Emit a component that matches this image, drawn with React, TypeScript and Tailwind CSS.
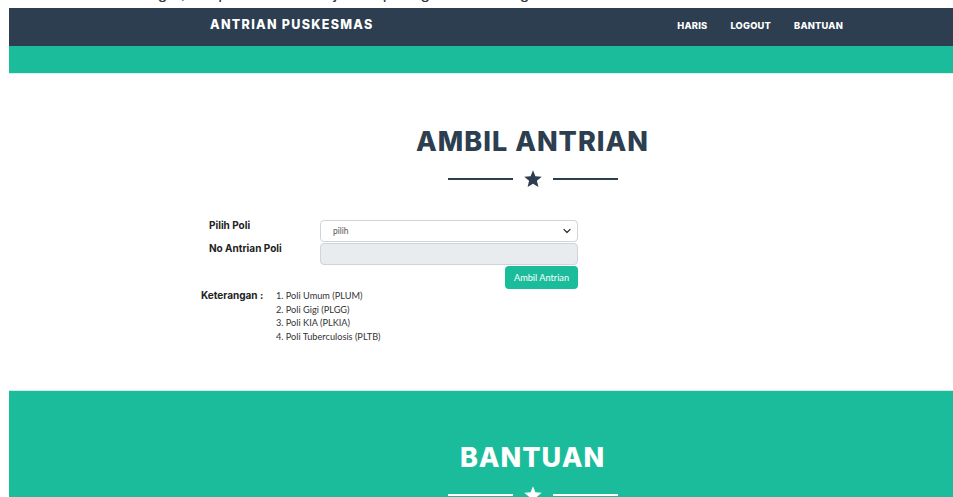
import React from "react";

const Star = ({ className }: { className: string }) => (
  <svg viewBox="0 0 24 24" className={className} fill="currentColor">
    <polygon points="12,1.5 14.9,8.6 22.5,9.2 16.7,14.2 18.5,21.7 12,17.7 5.5,21.7 7.3,14.2 1.5,9.2 9.1,8.6" />
  </svg>
);

const Divider = ({ light }: { light?: boolean }) => (
  <div className={`flex items-center justify-center gap-[10px] ${light ? "text-white" : "text-[#2c3e50]"}`}>
    <div className={`h-[2.5px] w-[65px] ${light ? "bg-white" : "bg-[#2c3e50]"}`} />
    <Star className="w-[20px] h-[20px]" />
    <div className={`h-[2.5px] w-[65px] ${light ? "bg-white" : "bg-[#2c3e50]"}`} />
  </div>
);

const heading = "font-['Inter',sans-serif] font-extrabold text-[27px] leading-[27px] tracking-[1px] text-center";
const labelCls = "font-['Inter',sans-serif] font-bold text-[10px] text-[#222]";

export default function App() {
  const poli = [
    "1. Poli Umum (PLUM)",
    "2. Poli Gigi (PLGG)",
    "3. Poli KIA (PLKIA)",
    "4. Poli Tuberculosis (PLTB)",
  ];

  return (
    <div className="w-[953px] h-[497px] overflow-hidden bg-white">
      {/* caption line above the page frame */}
      <div className="h-[8px] overflow-hidden">
        <p className="mt-[-16px] ml-[-2px] whitespace-nowrap font-['Liberation_Sans',Arial,sans-serif] text-[17px] leading-[20px] text-[#333]">
          Kemudian setelah Login, tampilan akan menjadi seperti gambar sebagai berikut
        </p>
      </div>

      <div className="ml-[9px]">
        {/* navbar */}
        <nav className="h-[38px] bg-[#2c3e50]">
          <div className="ml-[186px] w-[675px] h-full px-[15px] flex items-center justify-between pb-[3px]">
            <span className="font-['Inter',sans-serif] font-extrabold text-[12.5px] tracking-[1.3px] text-white">
              ANTRIAN PUSKESMAS
            </span>
            <div className="flex gap-[23px] pr-[12px] font-['Inter',sans-serif] font-extrabold text-[9.3px] text-white tracking-[0.2px]">
              <span>HARIS</span>
              <span>LOGOUT</span>
              <span>BANTUAN</span>
            </div>
          </div>
        </nav>
        <div className="h-[28px] bg-[#1abc9c] border-b border-[#d3f2ea]" />

        {/* ambil antrian */}
        <section className="h-[316px] pt-[54px]">
          <div className="ml-[186px] w-[675px] px-[15px]">
            <h1 className={`${heading} text-[#2c3e50]`}>AMBIL ANTRIAN</h1>
            <div className="mt-[14px]">
              <Divider />
            </div>

            <div className="mt-[31px] ml-[-1px]">
              <div className="grid grid-cols-[111px_258px] gap-y-[1px]">
                <div className={`${labelCls} mt-[-2px]`}>Pilih Poli</div>
                <div className="h-[22px] rounded-[4px] border border-[#ced4da] bg-white flex items-center justify-between pl-[12px] pr-[6px]">
                  <span className="font-['Lato',sans-serif] text-[8.5px] text-[#555]">pilih</span>
                  <svg viewBox="0 0 16 16" className="w-[8px] h-[8px] text-[#343a40]" fill="none" stroke="currentColor" strokeWidth="2.5" strokeLinecap="round" strokeLinejoin="round">
                    <path d="M2 5l6 6 6-6" />
                  </svg>
                </div>
                <div className={`${labelCls} mt-[-2px]`}>No Antrian Poli</div>
                <div className="h-[22px] rounded-[4px] border border-[#ced4da] bg-[#e9ecef]" />
                <div />
                <div className="flex justify-end">
                  <button className="h-[23px] w-[73px] rounded-[4px] bg-[#1abc9c] font-['Lato',sans-serif] text-[9.2px] text-white">
                    Ambil Antrian
                  </button>
                </div>
              </div>

              <div className="mt-0 ml-[-8px] flex">
                <div className={`${labelCls} w-[75px] leading-[13.7px]`}>Keterangan :</div>
                <ul className="font-['Lato',sans-serif] text-[9.2px] leading-[13.7px] text-[#333]">
                  {poli.map((p) => (
                    <li key={p}>{p}</li>
                  ))}
                </ul>
              </div>
            </div>
          </div>
        </section>

        {/* bantuan */}
        <section className="h-[200px] bg-[#1abc9c] border-t border-[#cfeee6] pt-[53px]">
          <div className="ml-[186px] w-[675px] px-[15px]">
            <h2 className={`${heading} text-white`}>BANTUAN</h2>
            <div className="mt-[14px]">
              <Divider light />
            </div>
          </div>
        </section>
      </div>
    </div>
  );
}
